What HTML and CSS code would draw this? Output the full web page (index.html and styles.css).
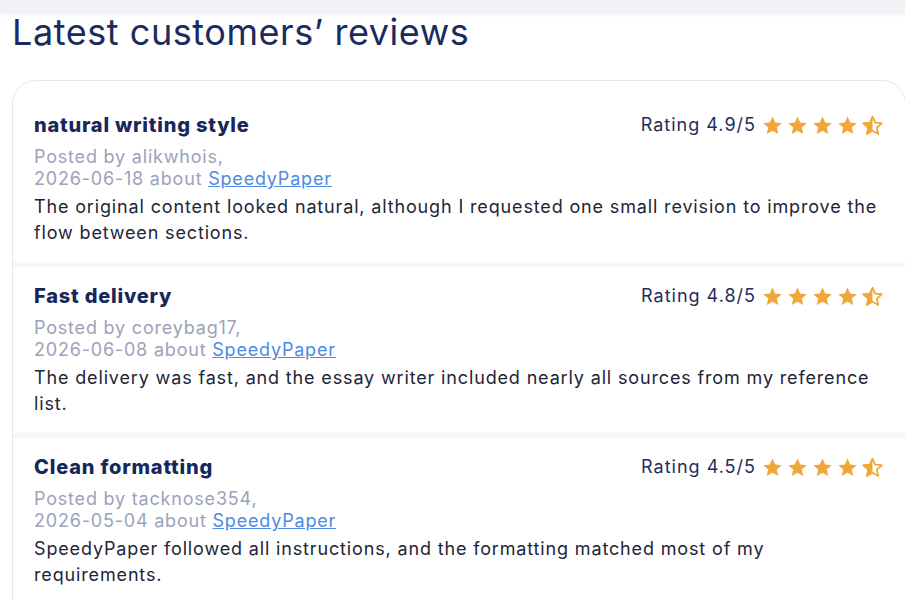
FILE: index.html
```html
<!DOCTYPE html>
<html lang="en">
<head>
<meta charset="utf-8">
<title>Latest customers’ reviews</title>
<link rel="stylesheet" href="styles.css">
</head>
<body>
<svg width="0" height="0" class="defs" aria-hidden="true">
  <defs>
    <symbol id="star" viewBox="0 0 24 24">
      <path d="M12 1.8l3.1 6.9 7.5.7-5.7 5 1.7 7.4L12 17.9l-6.6 3.9 1.7-7.4-5.7-5 7.5-.7z" fill="currentColor"/>
    </symbol>
    <symbol id="star-half" viewBox="0 0 24 24">
      <path d="M12 1.8l3.1 6.9 7.5.7-5.7 5 1.7 7.4L12 17.9l-6.6 3.9 1.7-7.4-5.7-5 7.5-.7z" fill="none" stroke="currentColor" stroke-width="2" stroke-linejoin="round"/>
      <path d="M12 1.8V17.9l-6.6 3.9 1.7-7.4-5.7-5 7.5-.7z" fill="currentColor"/>
    </symbol>
  </defs>
</svg>
<div class="topbar"></div>
<main class="page">
  <h1 class="heading">Latest customers’ reviews</h1>
  <section class="card">
    <article class="review">
      <div class="review-head">
        <h2 class="review-title">natural writing style</h2>
        <div class="rating">
          <span class="rating-text">Rating 4.9/5</span>
          <span class="stars">
            <svg class="star"><use href="#star"/></svg>
            <svg class="star"><use href="#star"/></svg>
            <svg class="star"><use href="#star"/></svg>
            <svg class="star"><use href="#star"/></svg>
            <svg class="star"><use href="#star-half"/></svg>
          </span>
        </div>
      </div>
      <p class="meta">Posted by alikwhois,<br>2026-06-18 about <a href="#" class="link">SpeedyPaper</a></p>
      <p class="text">The original content looked natural, although I requested one small revision to improve the flow between sections.</p>
    </article>
    <article class="review">
      <div class="review-head">
        <h2 class="review-title">Fast delivery</h2>
        <div class="rating">
          <span class="rating-text">Rating 4.8/5</span>
          <span class="stars">
            <svg class="star"><use href="#star"/></svg>
            <svg class="star"><use href="#star"/></svg>
            <svg class="star"><use href="#star"/></svg>
            <svg class="star"><use href="#star"/></svg>
            <svg class="star"><use href="#star-half"/></svg>
          </span>
        </div>
      </div>
      <p class="meta">Posted by coreybag17,<br>2026-06-08 about <a href="#" class="link">SpeedyPaper</a></p>
      <p class="text">The delivery was fast, and the essay writer included nearly all sources from my reference list.</p>
    </article>
    <article class="review">
      <div class="review-head">
        <h2 class="review-title">Clean formatting</h2>
        <div class="rating">
          <span class="rating-text">Rating 4.5/5</span>
          <span class="stars">
            <svg class="star"><use href="#star"/></svg>
            <svg class="star"><use href="#star"/></svg>
            <svg class="star"><use href="#star"/></svg>
            <svg class="star"><use href="#star"/></svg>
            <svg class="star"><use href="#star-half"/></svg>
          </span>
        </div>
      </div>
      <p class="meta">Posted by tacknose354,<br>2026-05-04 about <a href="#" class="link">SpeedyPaper</a></p>
      <p class="text">SpeedyPaper followed all instructions, and the formatting matched most of my requirements.</p>
    </article>
  </section>
</main>
</body>
</html>
```

FILE: styles.css
```css
html, body {
  margin: 0;
  padding: 0;
  overflow: hidden;
  background: #ffffff;
}

body {
  font-family: Inter, "Noto Sans", sans-serif;
  color: #1e2436;
}

.defs {
  position: absolute;
  width: 0;
  height: 0;
}

.topbar {
  height: 12px;
  background: #f0f1f5;
  box-shadow: 0 2px 4px rgba(220, 222, 230, 0.6);
}

.page {
  padding: 0 0 0 12px;
}

.heading {
  margin: 0;
  padding-top: 1px;
  height: 67px;
  font-size: 36px;
  line-height: 38px;
  font-weight: 400;
  color: #1b2a5f;
  letter-spacing: 0.56px;
}

.card {
  width: 892px;
  border: 1px solid #e5e8f0;
  border-radius: 24px 24px 0 0;
  padding-top: 15px;
  display: flex;
  flex-direction: column;
  background: #ffffff;
}

.review {
  padding: 14px 22px 16px 21px;
}

.review + .review {
  border-top: 5px solid #f4f7fc;
}

.review-head {
  display: flex;
  justify-content: space-between;
  align-items: center;
  height: 30px;
}

.review-title {
  margin: 0;
  font-size: 20px;
  line-height: 30px;
  font-weight: 800;
  color: #18275a;
  letter-spacing: 0.8px;
}

.rating {
  display: flex;
  align-items: center;
  gap: 6px;
}

.rating-text {
  font-size: 18px;
  line-height: 30px;
  color: #1f2d5e;
  letter-spacing: 1px;
}

.stars {
  display: flex;
  gap: 4px;
  color: #f0a73a;
}

.star {
  width: 21px;
  height: 21px;
  display: block;
}

.meta {
  margin: 6px 0 0;
  font-size: 18px;
  line-height: 22px;
  color: #9ca2b9;
  letter-spacing: 0.8px;
}

.link {
  color: #4c8be6;
  text-decoration: underline;
}

.text {
  margin: 4px 0 0;
  font-size: 18px;
  line-height: 26px;
  color: #1e2537;
  letter-spacing: 0.85px;
}
```
